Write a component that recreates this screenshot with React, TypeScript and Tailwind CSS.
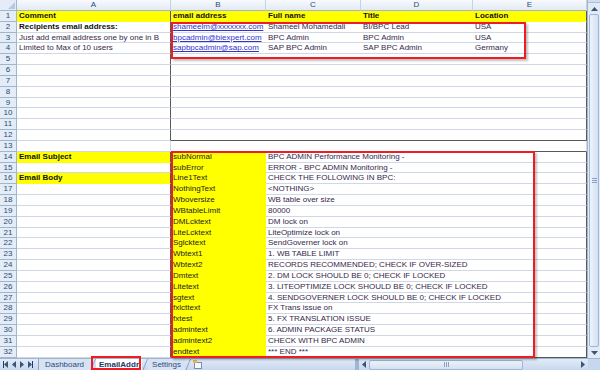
import React from 'react';

type Row = {
  a?: string;
  aBold?: boolean;
  aYellow?: boolean;
  b?: string;
  bLink?: boolean;
  c?: string;
  d?: string;
  e?: string;
};

const ROWS: Row[] = [
  { a: 'Comment', aBold: true, aYellow: true, b: 'email address', c: 'Full name', d: 'Title', e: 'Location' },
  { a: 'Recipients email address:', aBold: true, b: 'shameelm@xxxxxxx.com', bLink: true, c: 'Shameel Mohamedali', d: 'BI/BPC Lead', e: 'USA' },
  { a: 'Just add email address one by one in B', b: 'bpcadmin@biexpert.com', bLink: true, c: 'BPC Admin', d: 'BPC Admin', e: 'USA' },
  { a: 'Limited to Max of 10 users', b: 'sapbpcadmin@sap.com', bLink: true, c: 'SAP BPC Admin', d: 'SAP BPC Admin', e: 'Germany' },
  {}, {}, {}, {}, {}, {}, {}, {}, {},
  { a: 'Email Subject', aBold: true, aYellow: true, b: 'subNormal', c: 'BPC ADMIN Performance Monitoring -' },
  { b: 'subError', c: 'ERROR - BPC ADMIN Monitoring -' },
  { a: 'Email Body', aBold: true, aYellow: true, b: 'Line1Text', c: 'CHECK THE FOLLOWING IN BPC:' },
  { b: 'NothingText', c: '<NOTHING>' },
  { b: 'Wboversize', c: 'WB table over size' },
  { b: 'WBtableLimit', c: '80000' },
  { b: 'DMLcktext', c: 'DM lock on' },
  { b: 'LiteLcktext', c: 'LiteOptimize lock on' },
  { b: 'Sglcktext', c: 'SendGoverner lock on' },
  { b: 'Wbtext1', c: '1. WB TABLE LIMIT' },
  { b: 'Wbtext2', c: 'RECORDS RECOMMENDED; CHECK IF OVER-SIZED' },
  { b: 'Dmtext', c: '2. DM LOCK SHOULD BE 0; CHECK IF LOCKED' },
  { b: 'Litetext', c: '3. LITEOPTIMIZE LOCK SHOULD BE 0; CHECK IF LOCKED' },
  { b: 'sgtext', c: '4. SENDGOVERNER LOCK SHOULD BE 0; CHECK IF LOCKED' },
  { b: 'fxlcttext', c: 'FX Trans issue on' },
  { b: 'fxtest', c: '5. FX TRANSLATION ISSUE' },
  { b: 'admintext', c: '6. ADMIN PACKAGE STATUS' },
  { b: 'admintext2', c: 'CHECK WITH BPC ADMIN' },
  { b: 'endtext', c: '*** END ***' },
];

const COLS = ['A', 'B', 'C', 'D', 'E'];

const cell = 'border-b border-[#d0d7e5] pl-[2px] leading-[10px] whitespace-nowrap overflow-hidden';
const yellow = 'bg-[#ffff00] border-b-transparent';

function SheetRow({ row, i }: { row: Row; i: number }) {
  const n = i + 1;
  const boxed = n !== 13;
  const header = n === 1;
  const lower = n >= 14;
  const boxEdgeB = n === 12 || n === 13 || n === 32;
  const text = header ? 'font-bold text-[#111]' : 'text-[#35284a]';
  const edge = boxEdgeB ? 'border-b-[#595959]' : '';

  return (
    <>
      <div className="border-b border-r border-[#9eb6ce] bg-[#e4ecf7] text-center leading-[10px] text-[#2b4a74]">{n}</div>
      <div
        className={`${cell} border-r ${boxed ? 'border-r-[#595959]' : ''} ${row.aYellow ? yellow : ''} ${
          row.aBold ? 'font-bold text-[#111]' : 'text-[#35284a]'
        }`}
      >
        {row.a}
      </div>
      <div className={`${cell} ${header || lower ? yellow : ''} ${edge} ${header ? 'font-bold text-[#111]' : 'text-[#222]'}`}>
        {row.bLink ? <span className="text-[#3333cc] underline">{row.b}</span> : row.b}
      </div>
      {lower ? (
        <div className={`${cell} col-span-3 border-r border-r-[#595959] ${edge} text-[#35284a]`}>{row.c}</div>
      ) : (
        <>
          <div className={`${cell} ${header ? yellow : ''} ${edge} ${text}`}>{row.c}</div>
          <div className={`${cell} ${header ? yellow : ''} ${edge} ${text}`}>{row.d}</div>
          <div className={`${cell} border-r ${boxed ? 'border-r-[#595959]' : ''} ${header ? yellow : ''} ${edge} ${text}`}>
            {row.e}
          </div>
        </>
      )}
    </>
  );
}

const Tri = ({ dir }: { dir: 'up' | 'down' | 'left' | 'right' }) => {
  const pts = {
    up: '0,4 3.5,0 7,4',
    down: '0,0 3.5,4 7,0',
    left: '4,0 0,3.5 4,7',
    right: '0,0 4,3.5 0,7',
  }[dir];
  const vertical = dir === 'up' || dir === 'down';
  return (
    <svg width={vertical ? 7 : 4} height={vertical ? 4 : 7} viewBox={vertical ? '0 0 7 4' : '0 0 4 7'}>
      <polygon points={pts} fill="#3b5477" />
    </svg>
  );
};

const Slant = () => (
  <svg width="6" height="12" viewBox="0 0 6 12" className="shrink-0">
    <line x1="0.5" y1="12" x2="5.5" y2="0" stroke="#8aa4c8" strokeWidth="1" />
  </svg>
);

export default function App() {
  return (
    <div className="relative w-[600px] h-[370px] overflow-hidden bg-white font-['Liberation_Sans',Arial,sans-serif] text-[8px]">
      <div className="flex h-[358px]">
        <div className="relative w-[587px] h-[358px]">
          <div className="grid grid-cols-[17px_154px_95px_95px_112px_114px] grid-rows-[11px_repeat(32,10.84px)]">
            <div className="relative border-b border-r border-[#9eb6ce] bg-[#e4ecf7]">
              <svg width="7" height="7" viewBox="0 0 7 7" className="absolute right-[1px] bottom-[1px]">
                <polygon points="7,0 7,7 0,7" fill="#b7c9e0" />
              </svg>
            </div>
            {COLS.map((c) => (
              <div
                key={c}
                className="border-b border-r border-b-[#9eb6ce] border-r-[#c5d3e4] bg-linear-to-b from-[#f7f9fd] to-[#e3eaf5] text-center leading-[10px] text-[#2b4a74]"
              >
                {c}
              </div>
            ))}
            {ROWS.map((r, i) => (
              <SheetRow key={i} row={r} i={i} />
            ))}
          </div>

          {/* red highlight boxes */}
          <div className="absolute left-[171px] top-[22px] w-[355px] h-[37px] border-2 border-[#f01c24] shadow-[2px_2px_2px_rgba(0,0,0,0.25)]" />
          <div className="absolute left-[171px] top-[151px] w-[364px] h-[207px] border-2 border-[#f01c24] shadow-[2px_2px_2px_rgba(0,0,0,0.25)]" />
        </div>

        {/* vertical scrollbar */}
        <div className="flex w-[13px] flex-col border-l border-[#9eb6ce] bg-[#e2eaf6]">
          <div className="h-[3px] border-b border-[#a9bfdc] bg-[#d2deef]" />
          <div className="flex h-[11px] items-center justify-center">
            <Tri dir="up" />
          </div>
          <div className="mx-[1px] flex flex-1 items-center justify-center rounded-[2px] border border-[#9fb7d8] bg-linear-to-r from-[#eef3fb] to-[#d3e0f1]">
            <div className="flex flex-col gap-[1px]">
              <div className="h-px w-[5px] bg-[#8aa2c4]" />
              <div className="h-px w-[5px] bg-[#8aa2c4]" />
              <div className="h-px w-[5px] bg-[#8aa2c4]" />
            </div>
          </div>
          <div className="flex h-[11px] items-center justify-center">
            <Tri dir="down" />
          </div>
        </div>
      </div>

      {/* sheet tabs + horizontal scrollbar */}
      <div className="flex h-[12px] items-stretch border-t border-[#9eb6ce] bg-linear-to-b from-[#e3ecf8] to-[#c6d7ee] leading-[11px]">
        <div className="flex w-[39px] items-center gap-[4px] border-r border-[#8aa4c8] pl-[3px]">
          <div className="flex items-center">
            <div className="h-[7px] w-px bg-[#1f3b6b]" />
            <Tri dir="left" />
          </div>
          <Tri dir="left" />
          <Tri dir="right" />
          <div className="flex items-center">
            <Tri dir="right" />
            <div className="h-[7px] w-px bg-[#1f3b6b]" />
          </div>
        </div>
        <div className="w-[51px] bg-[#d7e3f3] text-center text-[#2d4c7c]">Dashboard</div>
        <Slant />
        <div className="w-[46px] bg-white text-center font-bold text-[#1c3765]">EmailAddr</div>
        <Slant />
        <div className="w-[37px] bg-[#d7e3f3] text-center text-[#2d4c7c]">Settings</div>
        <Slant />
        <div className="flex w-[14px] items-center justify-center">
          <svg width="10" height="9" viewBox="0 0 10 9">
            <rect x="1.5" y="2.5" width="7" height="6" fill="#f4f7fb" stroke="#7a8fae" />
            <rect x="0" y="0" width="4" height="3" fill="#e8b64a" />
          </svg>
        </div>
        <div className="flex-1" />
        <div className="flex w-[233px] items-center border-l border-[#9eb6ce]">
          <div className="h-full w-[3px] bg-[#9fb6d5]" />
          <div className="flex w-[10px] items-center justify-center">
            <Tri dir="left" />
          </div>
          <div className="flex h-[10px] w-[154px] items-center justify-center rounded-[2px] border border-[#9fb7d8] bg-linear-to-b from-[#eef3fb] to-[#d3e0f1]">
            <div className="flex gap-[1px]">
              <div className="h-[5px] w-px bg-[#8aa2c4]" />
              <div className="h-[5px] w-px bg-[#8aa2c4]" />
              <div className="h-[5px] w-px bg-[#8aa2c4]" />
            </div>
          </div>
          <div className="flex-1" />
          <div className="flex w-[10px] items-center justify-center">
            <Tri dir="right" />
          </div>
        </div>
        <div className="w-[12px] bg-[#c6d7ee]" />
      </div>

      {/* highlighted active tab */}
      <div className="absolute left-[91px] top-[356px] h-[14px] w-[50px] border-2 border-[#f01c24]" />
    </div>
  );
}
